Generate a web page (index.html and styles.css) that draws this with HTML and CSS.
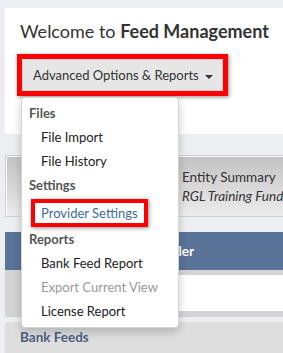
FILE: index.html
```html
<!DOCTYPE html>
<html lang="en">
<head>
    <meta charset="UTF-8">
    <title>Feed Management</title>
    <link rel="stylesheet" href="styles.css">
</head>
<body>
    <!-- Welcome panel -->
    <div class="welcome">
        <h1 class="title">Welcome to <b>Feed Management</b></h1>
        <div class="dropdown">
            <div class="marker">
                <button class="drop-btn">Advanced Options &amp; Reports <span class="caret"></span></button>
            </div>
            <ul class="menu">
                <li class="menu-head">Files</li>
                <li class="menu-item">File Import</li>
                <li class="menu-item">File History</li>
                <li class="menu-head">Settings</li>
                <li class="menu-item menu-marked"><span class="marker link">Provider Settings</span></li>
                <li class="menu-head">Reports</li>
                <li class="menu-item">Bank Feed Report</li>
                <li class="menu-item disabled">Export Current View</li>
                <li class="menu-item">License Report</li>
            </ul>
        </div>
    </div>

    <!-- Entity summary -->
    <div class="summary">
        <div class="summary-title">Entity Summary</div>
        <div class="summary-name">RGL Training Fund</div>
    </div>

    <!-- Feed table -->
    <div class="table-head">Feed Controller</div>
    <div class="table-row">
        <div class="row-cell"></div>
    </div>
    <div class="section">Bank Feeds</div>
</body>
</html>
```

FILE: styles.css
```css
body {
    margin: 0;
    padding: 8px 0 0 5px;
    background: #eceef1;
    font-family: Lato, "Open Sans", sans-serif;
    color: #333;
    overflow: hidden;
    height: 345px;
}
.welcome {
    background: #fff;
    height: 126px;
    padding: 0 0 0 15px;
    box-sizing: border-box;
    padding-top: 12px;
}
.title {
    margin: 0;
    font-size: 18px;
    font-weight: normal;
    line-height: 22px;
    color: #333;
}
.title b {
    font-weight: bold;
}
.dropdown {
    position: relative;
    display: inline-block;
    margin: 12px 0 0 -3px;
}
.marker {
    display: inline-block;
    border: 5px solid #f00;
    box-shadow: 1px 1px 4px rgba(0, 0, 0, 0.45);
}
.drop-btn {
    display: block;
    width: 201px;
    height: 32px;
    background: #e6e6e6;
    border: 1px solid #d0d0d0;
    padding: 0 0 0 10px;
    text-align: left;
    font-family: Lato, "Open Sans", sans-serif;
    font-size: 13px;
    color: #333;
}
.caret {
    display: inline-block;
    margin-left: 3px;
    vertical-align: middle;
    border-top: 4px solid #333;
    border-left: 4px solid transparent;
    border-right: 4px solid transparent;
}
.menu {
    position: absolute;
    left: 4px;
    top: 43px;
    width: 158px;
    height: 231px;
    box-sizing: border-box;
    margin: 0;
    padding: 3px 0 0;
    list-style: none;
    background: #fff;
    border: 1px solid #d4d4d4;
    border-radius: 4px;
    box-shadow: 0 4px 10px rgba(0, 0, 0, 0.2);
    z-index: 2;
}
.menu li {
    height: 24px;
    line-height: 24px;
    font-size: 13px;
    white-space: nowrap;
}
.menu-head {
    padding-left: 7px;
    font-weight: bold;
    color: #555;
}
.menu-item {
    padding-left: 19px;
    color: #222;
}
.menu-item.disabled {
    color: #999;
}
.menu .menu-marked {
    padding-left: 9px;
    height: 28px;
    line-height: 20px;
    margin-top: 2px;
}
.link {
    padding: 0 6px;
    color: #3d6aa3;
    border-width: 4px;
}
.summary {
    margin-top: 21px;
    height: 62px;
    box-sizing: border-box;
    border: 1px solid #d0d0d0;
    border-right: none;
    box-shadow: inset 1px 1px 0 #fff;
    background: linear-gradient(#c2c2c2, #ececec);
    padding: 12px 0 0 176px;
    font-size: 13.5px;
    color: #333;
    white-space: nowrap;
}
.summary-title {
    line-height: 18px;
}
.summary-name {
    line-height: 20px;
    font-style: italic;
}
.table-head {
    margin-top: 15px;
    height: 38px;
    line-height: 38px;
    background: #5a7398;
    color: #fff;
    font-weight: bold;
    font-size: 13.5px;
    padding-left: 96px;
}
.table-row {
    height: 47px;
    background: #d4d4d4;
    padding: 5px 0 6px 90px;
    box-sizing: border-box;
}
.row-cell {
    height: 100%;
    background: #fff;
}
.section {
    margin-top: 5px;
    height: 40px;
    background: #dedede;
    padding: 7px 0 0 15px;
    box-sizing: border-box;
    font-size: 13.5px;
    font-weight: bold;
    color: #4b5f80;
}
```
